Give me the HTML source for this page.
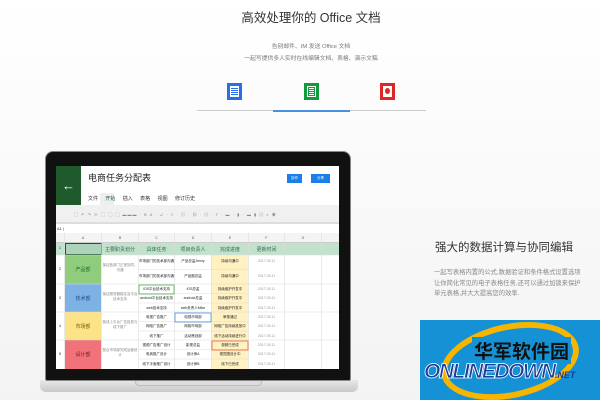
<!DOCTYPE html><html><head><meta charset="utf-8"><style>
*{margin:0;padding:0;box-sizing:border-box}
body{width:600px;height:400px;overflow:hidden;background:linear-gradient(#fff,#f3f3f3);font-family:"Liberation Sans","Noto Sans CJK SC",sans-serif;position:relative}
.a{position:absolute}
.t{white-space:nowrap}
.c{position:absolute;font-size:3.5px;color:#222;text-align:center;white-space:nowrap;overflow:hidden}
</style></head><body>
<div class="a t" style="left:0;width:622px;top:7px;text-align:center;font-size:12.5px;color:#333">高效处理你的 Office 文档</div>
<div class="a t" style="left:0;width:622px;top:41px;text-align:center;font-size:5.8px;color:#777">告别邮件、IM 发送 Office 文档</div>
<div class="a t" style="left:0;width:622px;top:53px;text-align:center;font-size:5.8px;color:#777">一起写提供多人实时在线编辑文档、表格、演示文稿</div>
<div class="a" style="left:227px;top:83px;width:15px;height:17px;background:#2a6de8"><div class="a" style="left:3px;top:3px;width:9px;height:11px;background:#fff"></div><div class="a" style="left:4px;top:5px;width:7px;height:1px;background:#2a6de8;box-shadow:0 2px #2a6de8,0 4px #2a6de8,0 6px #2a6de8"></div></div>
<div class="a" style="left:304px;top:83px;width:15px;height:17px;background:#139a3a"><div class="a" style="left:3px;top:3px;width:9px;height:11px;border:1px solid #fff"></div><div class="a" style="left:5px;top:5px;width:5px;height:1px;background:#fff;box-shadow:0 2px #fff,0 4px #fff,0 6px #fff"></div></div>
<div class="a" style="left:380px;top:83px;width:15px;height:17px;background:#e12424"><div class="a" style="left:3px;top:3px;width:9px;height:11px;background:#fff"></div><div class="a" style="left:5px;top:5px;width:5px;height:6px;border-radius:50%;background:#e12424"></div></div>
<div class="a" style="left:197px;top:110px;width:229px;height:1px;background:#ccc"></div>
<div class="a" style="left:273px;top:110px;width:77px;height:2px;background:#4a90e2"></div>

<div class="a" style="left:40px;top:380px;width:318px;height:12px;background:linear-gradient(#e8e8e8,#c9c9c9);border-radius:0 0 6px 6px"></div>
<div class="a" style="left:135px;top:381px;width:127px;height:5px;background:#ddd;border-radius:0 0 4px 4px;border:1px solid #bbb;border-top:none"></div>
<div class="a" style="left:45px;top:151px;width:306px;height:230px;background:#111;border-radius:8px 8px 2px 2px;border:1px solid #888"></div>
<div class="a" style="left:56px;top:166px;width:283px;height:203px;background:#fff;overflow:hidden">
 <div class="a" style="left:0;top:0;width:25px;height:39px;background:#1e5a2c;color:#fff;font-size:13px;text-align:center;line-height:39px">←</div>
 <div class="a t" style="left:32px;top:5px;font-size:9px;color:#222">电商任务分配表</div>
 <div class="a" style="left:231px;top:8px;width:15px;height:9px;background:#1a7fe8;color:#fff;font-size:3.5px;text-align:center;line-height:9px">协作</div>
 <div class="a" style="left:255px;top:8px;width:19px;height:9px;background:#1a7fe8;color:#fff;font-size:3.5px;text-align:center;line-height:9px">分享</div>
 <div class="a" style="left:44px;top:27px;width:14px;height:12px;background:#eee"></div>
 <div class="a t" style="left:32px;top:29px;font-size:5px;color:#333;word-spacing:6px">文件 <span style="color:#1e5a2c">开始</span> 插入 表格 视图 修订历史</div>
 <div class="a" style="left:0;top:39px;width:283px;height:19px;background:#f0f0f0;border-bottom:2px solid #ddd"></div>
 <div class="a t" style="left:18px;top:46px;font-size:4px;color:#888;letter-spacing:1px">▢ ↶ ↷ ✂ ▢ ▢ ▢ ▬▬▬ · B A · ∠ · ≡ · ▤ · ▦ · ▤ · T · ▬ · ▮ · ▬ ▮ ▤ ⌕ ◉</div>
 <div class="a t" style="left:1px;top:60px;font-size:4px;color:#333">A1 |</div>
 <div class="a" style="left:0;top:67px;width:283px;height:10px;background:#f4f4f4;border-bottom:1px solid #ccc"></div>
 <div class="a" style="left:0;top:77px;width:283px;height:12px;background:#c3e2cd"></div>
 <div class="a" style="left:9px;top:77px;width:37px;height:12px;border:1px solid #1e5a2c;background:#aed3bb"></div>
 <div class="a" style="left:9px;top:89px;width:36px;height:29px;background:#8fcc7c"></div>
 <div class="a" style="left:9px;top:118px;width:36px;height:28px;background:#7eb2e4"></div>
 <div class="a" style="left:9px;top:146px;width:36px;height:28px;background:#fde388"></div>
 <div class="a" style="left:9px;top:174px;width:36px;height:29px;background:#f2727a"></div>
 <div class="a" style="left:155px;top:89px;width:37px;height:114px;background:#fff1c2"></div>
 <svg class="a" style="left:0;top:67px" width="283" height="136">
  <g stroke="#ddd" stroke-width=".6">
   <line x1="8.5" y1="0" x2="8.5" y2="136"/><line x1="45.5" y1="0" x2="45.5" y2="136"/><line x1="82.5" y1="0" x2="82.5" y2="136"/><line x1="118.5" y1="0" x2="118.5" y2="136"/><line x1="155.5" y1="0" x2="155.5" y2="136"/><line x1="192.5" y1="0" x2="192.5" y2="136"/><line x1="228.5" y1="0" x2="228.5" y2="136"/><line x1="265.5" y1="0" x2="265.5" y2="136"/>
   <line x1="0" y1="22" x2="283" y2="22"/><line x1="82" y1="36.5" x2="192" y2="36.5"/><line x1="0" y1="51" x2="283" y2="51"/><line x1="82" y1="60.5" x2="192" y2="60.5"/><line x1="82" y1="70" x2="192" y2="70"/><line x1="0" y1="79" x2="283" y2="79"/><line x1="82" y1="88.5" x2="192" y2="88.5"/><line x1="82" y1="98" x2="192" y2="98"/><line x1="0" y1="107" x2="283" y2="107"/><line x1="82" y1="116.5" x2="192" y2="116.5"/><line x1="82" y1="126" x2="192" y2="126"/>
  </g>
  <rect x="83" y="52" width="35" height="9" fill="none" stroke="#4caf50" stroke-width=".8"/>
  <rect x="119" y="80" width="36" height="9" fill="none" stroke="#4a90e2" stroke-width=".8"/>
  <rect x="156" y="108" width="36" height="9" fill="none" stroke="#e8603a" stroke-width=".8"/>
 </svg>
 <div class="c" style="left:9px;top:70px;width:36px;color:#555">A</div><div class="c" style="left:46px;top:70px;width:36px;color:#555">B</div><div class="c" style="left:83px;top:70px;width:35px;color:#555">C</div><div class="c" style="left:119px;top:70px;width:36px;color:#555">D</div><div class="c" style="left:156px;top:70px;width:36px;color:#555">E</div><div class="c" style="left:193px;top:70px;width:35px;color:#555">F</div><div class="c" style="left:229px;top:70px;width:36px;color:#555">G</div>
 <div class="c" style="left:46px;top:80px;width:36px;font-size:5px;color:#2a6b55">主要职责划分</div><div class="c" style="left:83px;top:80px;width:35px;font-size:5px;color:#2a6b55">具体任务</div><div class="c" style="left:119px;top:80px;width:36px;font-size:5px;color:#2a6b55">项目负责人</div><div class="c" style="left:156px;top:80px;width:36px;font-size:5px;color:#2a6b55">完成进度</div><div class="c" style="left:193px;top:80px;width:35px;font-size:5px;color:#2a6b55">更新时间</div>
 <div class="c" style="left:0;top:80px;width:8px">1</div><div class="c" style="left:0;top:101px;width:8px">2</div><div class="c" style="left:0;top:130px;width:8px">3</div><div class="c" style="left:0;top:158px;width:8px">4</div><div class="c" style="left:0;top:186px;width:8px">5</div>
 <div class="c" style="left:9px;top:100px;width:36px;font-size:5px;color:#1e6a2c">产品部</div><div class="c" style="left:9px;top:129px;width:36px;font-size:5px;color:#1e4a8c">技术部</div><div class="c" style="left:9px;top:157px;width:36px;font-size:5px;color:#6a5a10">市场部</div><div class="c" style="left:9px;top:185px;width:36px;font-size:5px;color:#6a1a20">设计部</div>
 <div class="c" style="left:46px;top:97px;width:36px;color:#888;white-space:normal">保证各部门正常协同、沟通</div>
 <div class="c" style="left:46px;top:126px;width:36px;color:#888;white-space:normal">保证服务器稳定及平台技术支持</div>
 <div class="c" style="left:46px;top:154px;width:36px;color:#888;white-space:normal">各线上平台广告投放与线下推广</div>
 <div class="c" style="left:46px;top:182px;width:36px;color:#888;white-space:normal">配合市场部完成运营设计</div>
 <div class="c" style="left:83px;top:93px;width:35px">市场部门的技术部沟通</div><div class="c" style="left:119px;top:93px;width:36px">产品总监Jenny</div><div class="c" style="left:156px;top:93px;width:36px">持续沟通中</div><div class="c" style="left:193px;top:93px;width:35px;color:#999">2017.05.11</div>
 <div class="c" style="left:83px;top:108px;width:35px">市场部门的技术部沟通</div><div class="c" style="left:119px;top:108px;width:36px">产品副总监</div><div class="c" style="left:156px;top:108px;width:36px">持续沟通中</div><div class="c" style="left:193px;top:108px;width:35px;color:#999">2017.05.11</div>
 <div class="c" style="left:83px;top:121px;width:35px">iOS平台技术支持</div><div class="c" style="left:119px;top:121px;width:36px">iOS总监</div><div class="c" style="left:156px;top:121px;width:36px">持续维护开发中</div><div class="c" style="left:193px;top:121px;width:35px;color:#999">2017.05.11</div>
 <div class="c" style="left:83px;top:130px;width:35px">android平台技术支持</div><div class="c" style="left:119px;top:130px;width:36px">android总监</div><div class="c" style="left:156px;top:130px;width:36px">持续维护开发中</div><div class="c" style="left:193px;top:130px;width:35px;color:#999">2017.05.11</div>
 <div class="c" style="left:83px;top:140px;width:35px">web技术支持</div><div class="c" style="left:119px;top:140px;width:36px">web负责人Mike</div><div class="c" style="left:156px;top:140px;width:36px">持续维护开发中</div><div class="c" style="left:193px;top:140px;width:35px;color:#999">2017.05.11</div>
 <div class="c" style="left:83px;top:149px;width:35px">电视广告推广</div><div class="c" style="left:119px;top:149px;width:36px">电视市场部</div><div class="c" style="left:156px;top:149px;width:36px">审核通过</div><div class="c" style="left:193px;top:149px;width:35px;color:#999">2017.05.11</div>
 <div class="c" style="left:83px;top:158px;width:35px">网络广告推广</div><div class="c" style="left:119px;top:158px;width:36px">网络市场部</div><div class="c" style="left:156px;top:158px;width:36px">网络广告持续投放中</div><div class="c" style="left:193px;top:158px;width:35px;color:#999">2017.05.11</div>
 <div class="c" style="left:83px;top:168px;width:35px">线下推广</div><div class="c" style="left:119px;top:168px;width:36px">活动策划部</div><div class="c" style="left:156px;top:168px;width:36px">线下活动持续进行中</div><div class="c" style="left:193px;top:168px;width:35px;color:#999">2017.05.11</div>
 <div class="c" style="left:83px;top:177px;width:35px">视频广告推广设计</div><div class="c" style="left:119px;top:177px;width:36px">影视总监</div><div class="c" style="left:156px;top:177px;width:36px">视频已完成</div><div class="c" style="left:193px;top:177px;width:35px;color:#999">2017.05.11</div>
 <div class="c" style="left:83px;top:186px;width:35px">电商推广设计</div><div class="c" style="left:119px;top:186px;width:36px">设计师A</div><div class="c" style="left:156px;top:186px;width:36px">视觉图设计中</div><div class="c" style="left:193px;top:186px;width:35px;color:#999">2017.05.11</div>
 <div class="c" style="left:83px;top:196px;width:35px">线下平面推广设计</div><div class="c" style="left:119px;top:196px;width:36px">设计师B</div><div class="c" style="left:156px;top:196px;width:36px">线下已完成</div><div class="c" style="left:193px;top:196px;width:35px;color:#999">2017.05.11</div>
</div>

<div class="a t" style="left:435px;top:239px;font-size:11.5px;color:#333">强大的数据计算与协同编辑</div>
<div class="a" style="left:434px;top:268px;width:150px;font-size:6.3px;line-height:10.5px;color:#888">一起写表格内置的公式,数据验证和条件格式设置选项让你简化常见的电子表格任务,还可以通过加锁来保护单元表格,并大大提高您的效率.</div>

<div class="a" style="left:420px;top:320px;width:180px;height:80px;background:#1592d6;overflow:hidden">
 <div class="a" style="left:20px;top:4px;width:140px;height:74px;border:6px solid #f7b500;border-radius:50%;transform:rotate(-12deg)"></div>
 <div class="a t" style="left:52px;top:17px;font-size:19px;font-weight:bold;color:#111;background:#1592d6;padding:0 2px">华军软件园</div>
 <div class="a t" style="left:4px;top:40px;font-size:21px;font-weight:bold;font-style:italic;color:#1b3f96;-webkit-text-stroke:0.8px #fff;letter-spacing:-1.5px">ONLINEDOWN<span style="font-size:9px;-webkit-text-stroke:0;color:#1b3f96;letter-spacing:0">.NET</span></div>
</div>
</body></html>
